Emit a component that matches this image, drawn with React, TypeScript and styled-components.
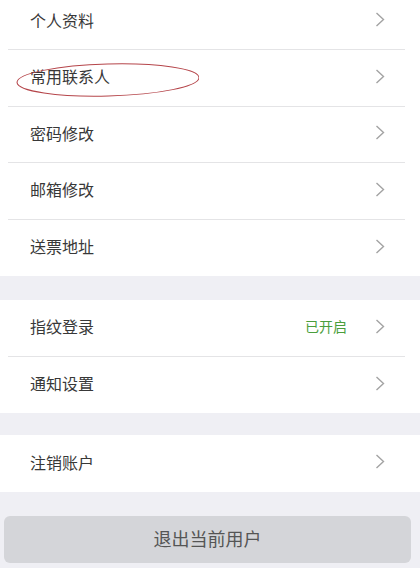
import React from "react";
import styled, { createGlobalStyle } from "styled-components";

const GlobalStyle = createGlobalStyle`
  html, body {
    margin: 0;
    padding: 0;
    background: #efeff4;
    font-family: "Noto Sans CJK SC", "Noto Sans", sans-serif;
  }
`;

const Page = styled.div`
  width: 420px;
  height: 568px;
  overflow: hidden;
  background: #efeff4;
  position: relative;
`;

const Group = styled.div<{ $gap: number }>`
  background: #fff;
  margin-top: ${(p) => p.$gap}px;
`;

const Row = styled.div`
  position: relative;
  height: 56.5px;
  box-sizing: border-box;
  margin-left: 8px;
  margin-right: 15px;
  padding: 0 20px 3px 22px;
  display: flex;
  align-items: center;
  border-bottom: 1px solid #e4e4e6;

  &:last-child {
    border-bottom: none;
  }
`;

const Label = styled.span`
  flex: 1;
  font-size: 16px;
  color: #383838;
`;

const Status = styled.span`
  font-size: 14px;
  color: #4a9e3c;
  margin-right: 28px;
`;

const Chevron = () => (
  <svg width="10" height="15" viewBox="0 0 10 15" fill="none">
    <polyline
      points="1.5,1 8.5,7.5 1.5,14"
      stroke="#a3a3a3"
      strokeWidth="1.4"
      strokeLinejoin="miter"
    />
  </svg>
);

// hand-drawn red ring around a row label
const Mark = styled.svg`
  position: absolute;
  left: -9px;
  top: 6px;
  pointer-events: none;
`;

const LogoutButton = styled.button`
  display: block;
  margin: 24px 9px 0 4px;
  width: 407px;
  height: 47px;
  border: none;
  border-radius: 6px;
  background: #d4d5d9;
  color: #555;
  font-family: "Noto Sans CJK SC", "Noto Sans", sans-serif;
  font-size: 18px;
  padding: 0 0 2px;
`;

type Item = { label: string; status?: string; marked?: boolean };

const groups: { gap: number; items: Item[] }[] = [
  {
    gap: -6.5,
    items: [
      { label: "个人资料" },
      { label: "常用联系人", marked: true },
      { label: "密码修改" },
      { label: "邮箱修改" },
      { label: "送票地址" },
    ],
  },
  {
    gap: 24,
    items: [{ label: "指纹登录", status: "已开启" }, { label: "通知设置" }],
  },
  {
    gap: 22,
    items: [{ label: "注销账户" }],
  },
];

export default function App() {
  return (
    <Page>
      <GlobalStyle />
      {groups.map((g, i) => (
        <Group key={i} $gap={g.gap}>
          {g.items.map((it) => (
            <Row key={it.label}>
              <Label>{it.label}</Label>
              {it.status && <Status>{it.status}</Status>}
              <Chevron />
              {it.marked && (
                <Mark width="200" height="50" viewBox="0 0 200 50">
                  <ellipse
                    cx="109"
                    cy="24"
                    rx="91"
                    ry="16"
                    fill="none"
                    stroke="#b5454a"
                    strokeWidth="1"
                    transform="rotate(-1.5 109 24)"
                  />
                </Mark>
              )}
            </Row>
          ))}
        </Group>
      ))}
      <LogoutButton>退出当前用户</LogoutButton>
    </Page>
  );
}
